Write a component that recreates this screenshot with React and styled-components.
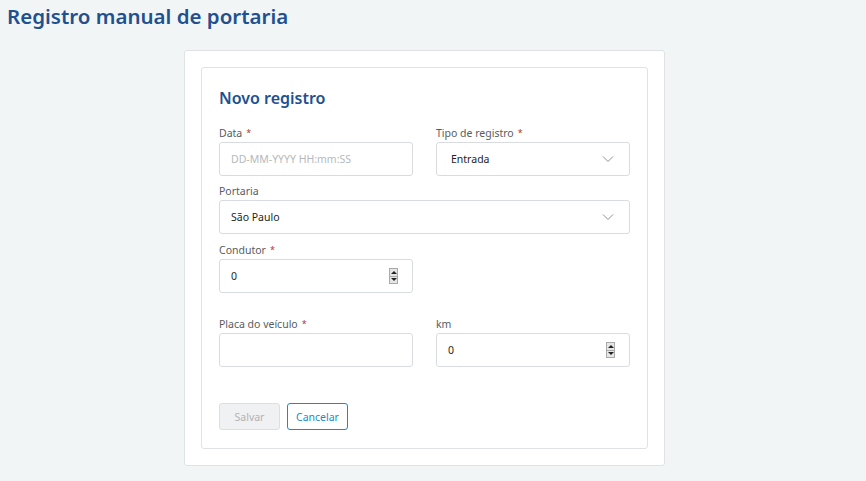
import React from 'react';
import styled, { createGlobalStyle } from 'styled-components';

const GlobalStyle = createGlobalStyle`
    body {
        margin: 0;
        background: #f2f5f6;
        font-family: "Noto Sans", "Open Sans", sans-serif;
    }
`;

const Page = styled.div`
    width: 866px;
    height: 481px;
    overflow: hidden;
`;

const PageTitle = styled.h1`
    margin: 0;
    padding: 3px 7px 0;
    height: 50px;
    box-sizing: border-box;
    font-size: 20.5px;
    line-height: 26px;
    font-weight: 600;
    color: #21508f;
`;

const OuterCard = styled.div`
    width: 481px;
    margin-left: 184px;
    box-sizing: border-box;
    background: #fff;
    border: 1px solid #dfe3e6;
    border-radius: 3px;
    padding: 16px;
`;

const InnerCard = styled.div`
    border: 1px solid #dfe3e6;
    border-radius: 3px;
    padding: 18px 17px 18px;
`;

const CardTitle = styled.h2`
    margin: 2px 0 17px;
    font-size: 16px;
    line-height: 20px;
    font-weight: 600;
    color: #21508f;
`;

const Row = styled.div`
    display: grid;
    grid-template-columns: 194px 194px;
    column-gap: 23px;
    margin-top: ${p => p.$gap ?? 8}px;
`;

const Field = styled.div`
    grid-column: ${p => (p.$wide ? '1 / span 2' : 'auto')};
`;

const Label = styled.div`
    font-size: 10.5px;
    line-height: 16px;
    margin-bottom: 1px;
    color: #585c61;
`;

const Req = styled.span`
    color: #b03a2e;
    margin-left: 4px;
    font-size: 9px;
    vertical-align: 1px;
`;

const Box = styled.div`
    height: 34px;
    box-sizing: border-box;
    border: 1px solid #d8dce0;
    border-radius: 3px;
    background: #fff;
    display: flex;
    align-items: center;
    padding: 0 12px 0 ${p => p.$pad || 11}px;
    font-size: 10.5px;
    color: ${p => (p.$placeholder ? '#b5b9bd' : '#1b1f23')};
`;

const Value = styled.span`
    flex: 1;
`;

const Chevron = styled.svg`
    width: 12px;
    height: 8px;
    margin-right: 3px;
`;

const Spinner = styled.div`
    display: flex;
    flex-direction: column;
    width: 9px;
    height: 16px;
    border: 1px solid #a9a9a9;
    background: #e6e6e6;
    box-sizing: border-box;
    margin-right: 2px;
`;

const SpinHalf = styled.div`
    flex: 1;
    display: flex;
    align-items: center;
    justify-content: center;
    border-top: ${p => (p.$down ? '1px solid #a9a9a9' : 'none')};
`;

const Tri = styled.div`
    width: 0;
    height: 0;
    border-left: 3px solid transparent;
    border-right: 3px solid transparent;
    ${p => (p.$down ? 'border-top: 3px solid #222;' : 'border-bottom: 3px solid #222;')}
`;

const Actions = styled.div`
    display: flex;
    gap: 7px;
    margin-top: 36px;
`;

const Button = styled.button`
    height: 27px;
    padding: 0;
    width: ${p => p.$w}px;
    border-radius: 3px;
    font-family: inherit;
    font-size: 10.5px;
    box-sizing: border-box;
    background: ${p => (p.$disabled ? '#f0f1f3' : '#fff')};
    color: ${p => (p.$disabled ? '#b0b3b7' : '#1a8bc8')};
    border: 1px solid ${p => (p.$disabled ? '#dcdee1' : '#1a8bc8')};
`;

function Select({ value, pad }) {
    return (
        <Box $pad={pad}>
            <Value>{value}</Value>
            <Chevron viewBox="0 0 12 8">
                <path d="M1 1.5 L6 6.5 L11 1.5" fill="none" stroke="#8d9297" strokeWidth="1" />
            </Chevron>
        </Box>
    );
}

function NumberBox({ value }) {
    return (
        <Box>
            <Value>{value}</Value>
            <Spinner>
                <SpinHalf><Tri /></SpinHalf>
                <SpinHalf $down><Tri $down /></SpinHalf>
            </Spinner>
        </Box>
    );
}

export default function App() {
    return (
        <Page>
            <GlobalStyle />
            <PageTitle>Registro manual de portaria</PageTitle>
            <OuterCard>
                <InnerCard>
                    <CardTitle>Novo registro</CardTitle>
                    <Row $gap={0}>
                        <Field>
                            <Label>Data<Req>*</Req></Label>
                            <Box $placeholder>DD-MM-YYYY HH:mm:SS</Box>
                        </Field>
                        <Field>
                            <Label>Tipo de registro<Req>*</Req></Label>
                            <Select value="Entrada" pad={14} />
                        </Field>
                    </Row>
                    <Row $gap={7}>
                        <Field $wide>
                            <Label>Portaria</Label>
                            <Select value="São Paulo" />
                        </Field>
                    </Row>
                    <Row $gap={8}>
                        <Field>
                            <Label>Condutor<Req>*</Req></Label>
                            <NumberBox value="0" />
                        </Field>
                    </Row>
                    <Row $gap={23}>
                        <Field>
                            <Label>Placa do veículo<Req>*</Req></Label>
                            <Box />
                        </Field>
                        <Field>
                            <Label>km</Label>
                            <NumberBox value="0" />
                        </Field>
                    </Row>
                    <Actions>
                        <Button $w={61} $disabled>Salvar</Button>
                        <Button $w={61}>Cancelar</Button>
                    </Actions>
                </InnerCard>
            </OuterCard>
        </Page>
    );
}
